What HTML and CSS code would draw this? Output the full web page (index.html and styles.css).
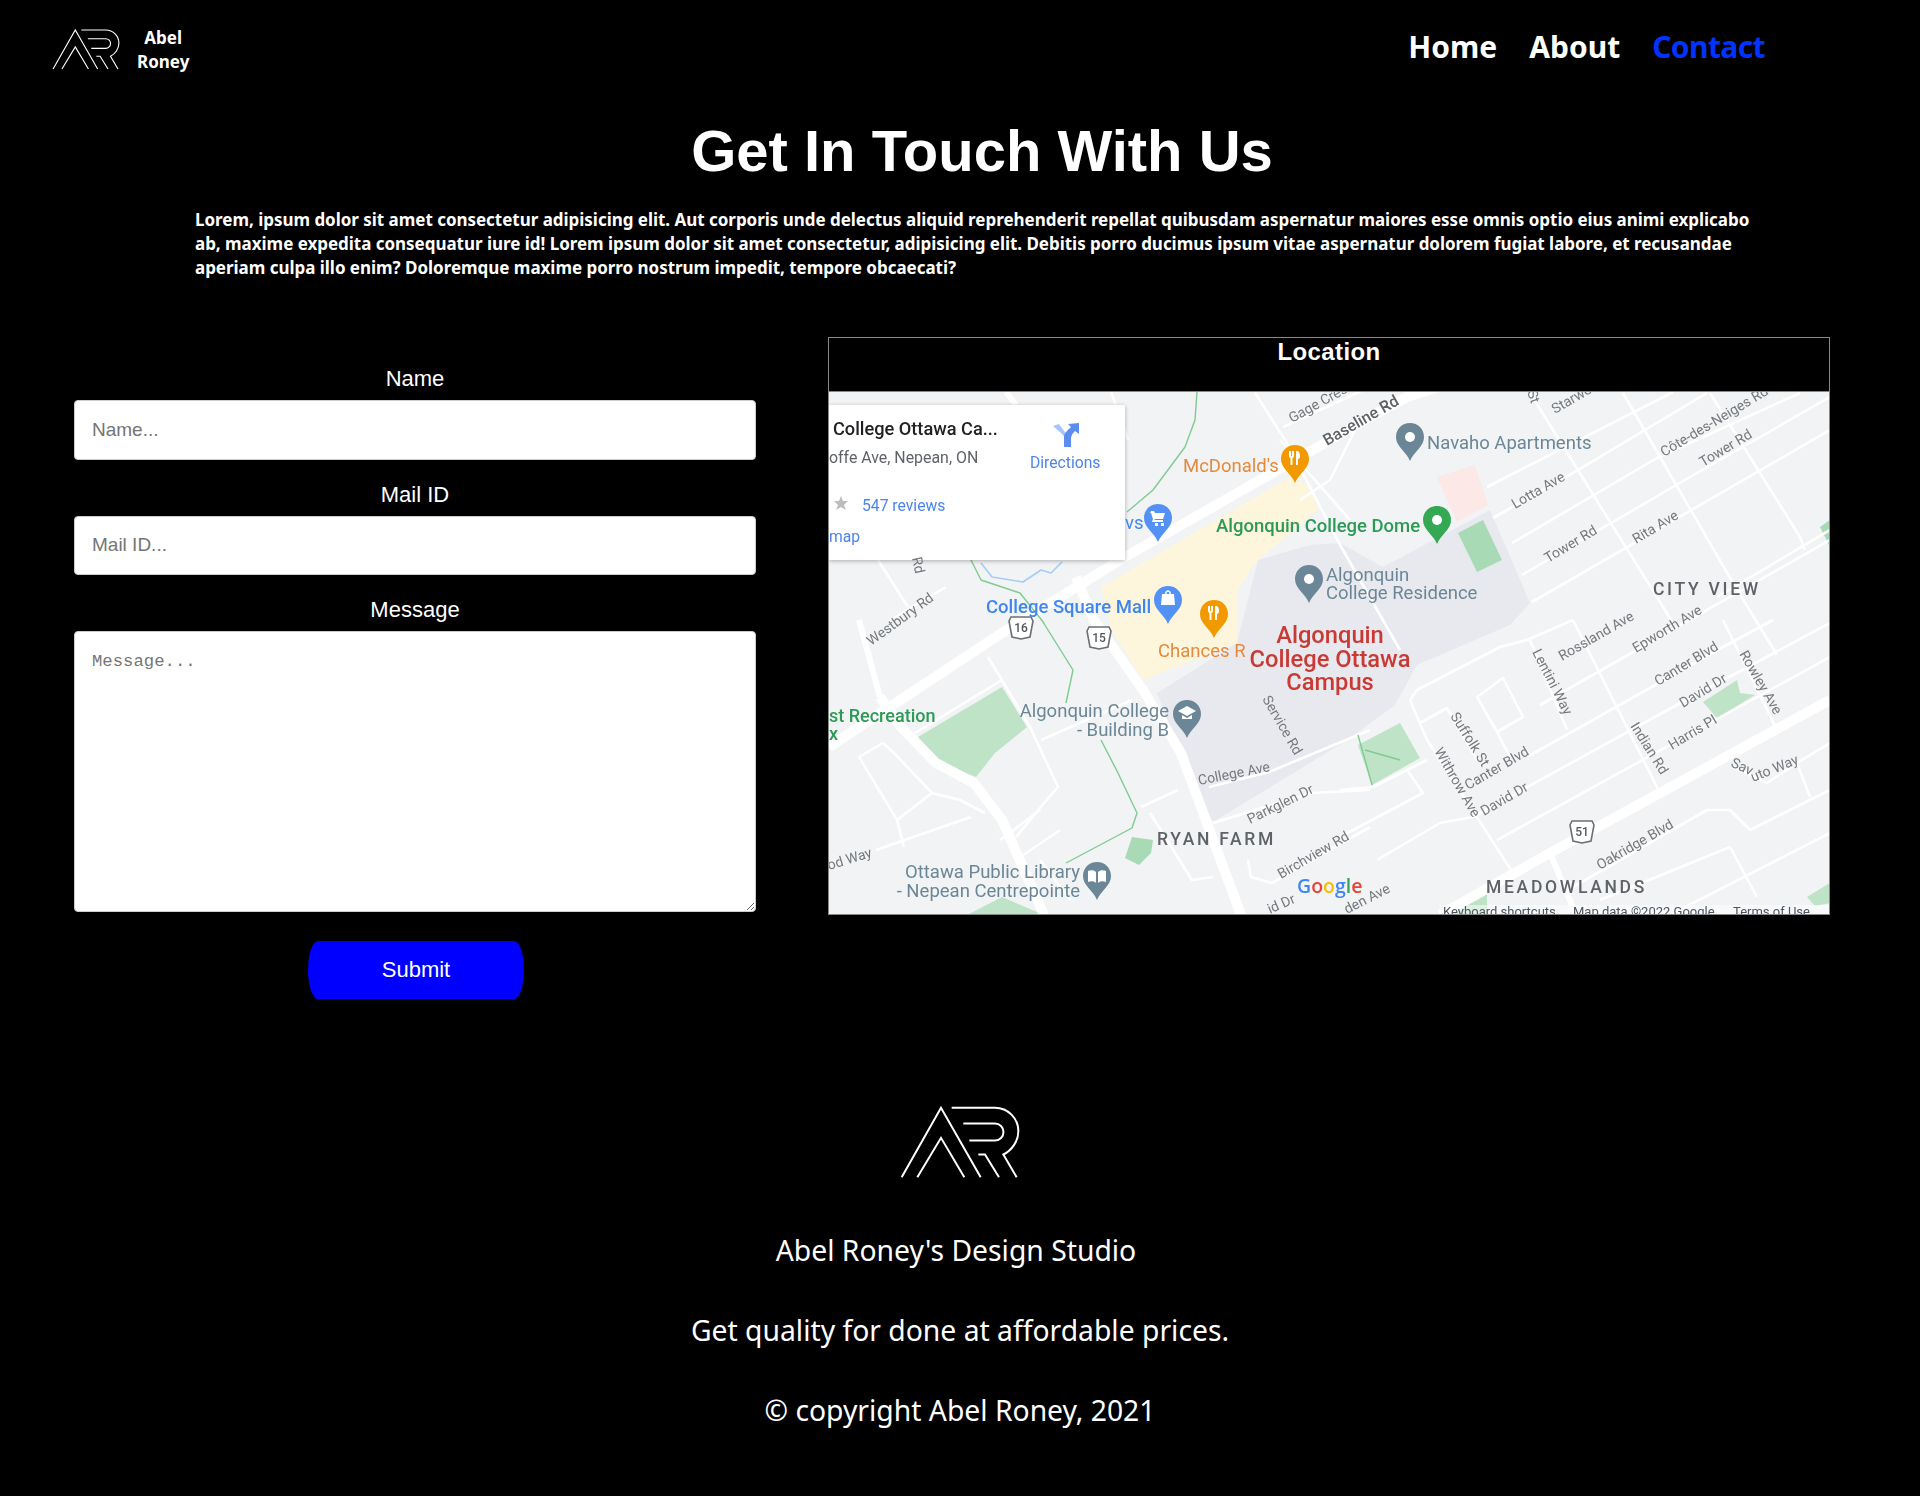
FILE: index.html
```html
<!DOCTYPE html>
<html lang="en">
<head>
  <meta charset="UTF-8" />
  <meta name="viewport" content="width=device-width, initial-scale=1.0" />
  <title>Contact - Abel Roney</title>
  <link rel="stylesheet" href="styles.css">
</head>
<body>
  <svg class="defs" width="0" height="0">
    <defs>
      <g id="ar" fill="none" stroke="currentColor" stroke-width="6">
        <path d="M65 258 183 50 302 258" />
        <path d="M112 258 183 140 253 258" />
        <path d="M215 50H345A70 70 0 0 1 415 120C415 150 395 178 370 190L410 258" />
        <path d="M250 97H345A25 25 0 0 1 345 148H268" />
        <path d="M295 190H315L357 258" />
      </g>
      <path id="pin" d="M14 0C6 0 0 6 0 14c0 10 10 14 14 24 4-10 14-14 14-24C28 6 22 0 14 0z" />
      <g id="shield">
        <path d="M-10-11H10L12-7 9 9 0 11-9 9-12-7z" fill="#fff" stroke="#6b7075" stroke-width="1.6" />
      </g>
    </defs>
  </svg>

  <header class="topbar">
    <a class="brand" href="#">
      <svg class="brand-logo" viewBox="60 45 360 218"><use href="#ar" /></svg>
      <span class="brand-name">Abel<br>Roney</span>
    </a>
    <nav class="nav">
      <a href="#">Home</a>
      <a href="#">About</a>
      <a class="active" href="#">Contact</a>
    </nav>
  </header>

  <main>
    <h1>Get In Touch With Us</h1>
    <p class="intro">Lorem, ipsum dolor sit amet consectetur adipisicing elit. Aut corporis unde delectus aliquid reprehenderit repellat quibusdam aspernatur maiores esse omnis optio eius animi explicabo ab, maxime expedita consequatur iure id! Lorem ipsum dolor sit amet consectetur, adipisicing elit. Debitis porro ducimus ipsum vitae aspernatur dolorem fugiat labore, et recusandae aperiam culpa illo enim? Doloremque maxime porro nostrum impedit, tempore obcaecati?</p>

    <section class="contact">
      <form class="contact-form">
        <label for="name">Name</label>
        <input type="text" id="name" placeholder="Name..." />
        <label for="mail">Mail ID</label>
        <input type="text" id="mail" placeholder="Mail ID..." />
        <label for="message">Message</label>
        <textarea id="message" placeholder="Message..."></textarea>
        <button type="submit">Submit</button>
      </form>

      <div class="location">
        <h2>Location</h2>
        <svg class="map" viewBox="829 392 1000 522" width="1000" height="522">
          <rect x="829" y="392" width="1001" height="523" fill="#f1f3f4" />

          <!-- areas -->
          <path fill="#e8e9ee" d="M1157 693 1237 643 1258 560 1310 545 1340 543 1383 567 1490 510 1530 603 1510 625 1417 665 1395 705 1343 743 1213 822 1181 753z" />
          <path fill="#fdf5dc" d="M1101 587 1290 477 1311 487 1318 510 1258 560 1237 590 1237 643 1143 680 1111 630z" />
          <path fill="#fce8e6" d="M1437 477 1475 465 1488 505 1457 522z" />
          <g fill="#a8dab5">
            <path d="M1458 533 1483 520 1502 560 1477 572z" />
            <path d="M1132 837 1153 840 1151 853 1139 865 1125 858z" />
            <path d="M1820 527 1830 520V547z" />
          </g>
          <g fill="#bfe3c6">
            <path d="M918 737 1002 687 1027 727 995 753 976 777 939 763z" />
            <path d="M1358 745 1400 723 1420 758 1372 785z" />
            <path d="M1703 702 1737 680 1740 693 1755 695 1717 718z" />
            <path d="M1807 897 1830 883V903L1815 906z" />
            <path d="M1467 897 1487 892V915H1440z" />
            <path d="M967 915 1002 897 1044 915z" />
          </g>

          <!-- main roads -->
          <g class="road-major">
            <path d="M829 747 1002 633 1125 557 1290 463 1370 417 1407 397 1445 385" />
            <path d="M1076 577 1094 620 1143 690 1181 753 1241 915" />
            <path d="M880 697 901 727 936 763 974 783 1002 820 1044 915" />
            <path d="M1440 915 1550 853 1660 793 1830 700" />
          </g>
          <path class="road-mid" d="M1006 392 1016 405M1550 853 1577 917M859 620 880 697" />

          <!-- small streets -->
          <g class="road">
            <path d="M1255 393 1287 443 1339 543 1400 650" />
            <path d="M1283 427 1370 387" />
            <path d="M1487 487 1673 392M1493 518 1573 473 1707 393M1512 543 1657 458 1800 393M1522 575 1690 477 1830 397M1532 602 1830 430M1717 597 1830 530" />
            <path d="M1530 393 1673 623M1623 393 1733 583 1777 655M1710 393 1800 537 1805 550" />
            <path d="M1410 700 1417 690 1500 647 1527 640 1573 620M1410 700 1427 740 1513 873" />
            <path d="M1540 705 1830 540M1527 757 1723 647 1773 620M1473 817 1673 707 1830 623M1497 840 1830 657" />
            <path d="M1573 620 1660 793M1723 620 1777 730" />
            <path d="M1377 860 1440 823 1473 817M1573 887 1707 810 1730 810 1750 830 1830 790M1600 900 1730 847M1660 920 1830 833" />
            <path d="M1730 847 1757 897M1733 767 1767 783 1797 763 1830 743M1797 763 1810 797" />
            <path d="M1420 723 1447 708 1477 760M1477 697 1503 678 1523 717 1497 732zM1497 732 1510 757M1530 640 1567 730" />
            <path d="M1340 790 1373 787 1427 760M1407 770 1423 793 1340 837" />
            <path d="M988 657 1030 727 1058 787 1044 803 1016 837M915 733 1002 680M1041 740 1132 700" />
            <path d="M859 757 883 743 894 753 932 793 960 800 985 813M859 757 897 820 904 847M897 820 932 793M876 850 971 817" />
            <path d="M1209 787 1269 772 1370 730M1141 807 1178 790M1213 823 1311 793 1370 790M1248 860 1251 877 1272 883 1370 827M1150 813 1192 880 1213 877" />
            <path d="M878 560 908 607M890 620 946 587M1111 392 1128 440M1280 440 1350 520M1360 420 1330 480 1300 500" />
            <path d="M1000 840 1040 810M1016 860 1060 830M1040 860 1070 900" />
          </g>

          <!-- trails and water -->
          <g class="trail">
            <path d="M1043 622 1073 670 1066 703M1101 740 1118 773 1137 813 1132 828 1066 863" />
            <path d="M1197 392 1195 420 1185 447 1153 490 1127 512" />
            <path d="M971 560 981 580 1020 593 1044 623" />
            <path d="M1358 735 1372 785M1365 750 1400 760" />
          </g>
          <path class="water" d="M981 563 992 577 1023 582 1041 570 1051 573 1062 562" />

          <!-- info panel -->
          <rect class="panel" x="829" y="405" width="296" height="155" />
          <text class="panel-title" x="833" y="435">College Ottawa Ca...</text>
          <text class="panel-sub" x="829" y="463">offe Ave, Nepean, ON</text>
          <text class="panel-link" x="862" y="511">547 reviews</text>
          <text class="panel-link" x="829" y="542">map</text>
          <text class="panel-link" x="1030" y="468">Directions</text>
          <path fill="#bdbdbd" d="M841 496 843 501 848 501 844 505 846 510 841 507 836 510 838 505 834 501 839 501z" />
          <path fill="#a6c5fa" d="M1053 426 1059 424 1067 435 1067 440 1062 434z" />
          <path fill="#5b8def" d="M1064 447V437C1064 433 1068 430 1071 427L1068 424 1079 423 1079 434 1075 431C1072 434 1071 436 1071 439V447z" />

          <!-- place labels -->
          <text class="lb orange" x="1183" y="472">McDonald's</text>
          <text class="lb blue" x="1125" y="529">vs</text>
          <text class="lb green bold" x="1216" y="532">Algonquin College Dome</text>
          <text class="lb slate" x="1427" y="449">Navaho Apartments</text>
          <text class="lb slate" x="1326" y="581">Algonquin</text>
          <text class="lb slate" x="1326" y="599">College Residence</text>
          <text class="lb blue bold" x="986" y="613">College Square Mall</text>
          <text class="lb orange" x="1158" y="657">Chances R</text>
          <text class="lb-red" x="1330" y="643">Algonquin</text>
          <text class="lb-red" x="1330" y="667">College Ottawa</text>
          <text class="lb-red" x="1330" y="690">Campus</text>
          <text class="lb lb-small green bold" x="829" y="722">st Recreation</text>
          <text class="lb lb-small green bold" x="829" y="740">x</text>
          <text class="lb slate end" x="1169" y="717">Algonquin College</text>
          <text class="lb slate end" x="1169" y="736">- Building B</text>
          <text class="lb slate end" x="1080" y="878">Ottawa Public Library</text>
          <text class="lb slate end" x="1080" y="897">- Nepean Centrepointe</text>
          <text class="hood" x="1157" y="845">RYAN FARM</text>
          <text class="hood" x="1486" y="893">MEADOWLANDS</text>
          <text class="hood" x="1653" y="595">CITY VIEW</text>

          <!-- pins -->
          <g fill="#f29900">
            <use href="#pin" x="1281" y="445" />
            <use href="#pin" x="1200" y="600" />
          </g>
          <g fill="#5491f5">
            <use href="#pin" x="1144" y="504" />
            <use href="#pin" x="1154" y="586" />
          </g>
          <use href="#pin" x="1423" y="506" fill="#34a853" />
          <g fill="#6b8797">
            <use href="#pin" x="1396" y="423" />
            <use href="#pin" x="1295" y="565" />
            <use href="#pin" x="1173" y="700" />
            <use href="#pin" x="1083" y="862" />
          </g>
          <g fill="#fff">
            <circle cx="1410" cy="437" r="5" />
            <circle cx="1309" cy="579" r="5" />
            <circle cx="1437" cy="520" r="5" />
            <path d="M1289 451h2v5h1v-5h2v5c0 1-1 2-1.500 2v7h-2v-7c-.5 0-1.500-1-1.500-2zM1297 451c2 0 3 2 3 5 0 2-1 3-2 3v6h-2v-14z" />
            <path d="M1208 606h2v5h1v-5h2v5c0 1-1 2-1.500 2v7h-2v-7c-.5 0-1.500-1-1.500-2zM1216 606c2 0 3 2 3 5 0 2-1 3-2 3v6h-2v-14z" />
            <path d="M1151 511h3l1 2h10l-2 6h-8l-1 1h9v2h-11l1-3-2-6h-1zM1155 523h3v3h-3zM1161 523h3v3h-3z" />
            <path d="M1162 594h12l1 11h-14zM1165 594c0-5 6-5 6 0h-1.500c0-3-3-3-3 0z" />
            <path d="M1187 706 1196 711 1187 716 1178 711zM1182 715 1187 718 1192 715V719H1182z" />
            <path d="M1088 871C1091 870 1094 870 1096 872V883C1094 881 1091 881 1088 882zM1106 871C1103 870 1100 870 1098 872V883C1100 881 1103 881 1106 882z" />
          </g>

          <!-- route shields -->
          <use href="#shield" x="1021" y="628" />
          <use href="#shield" x="1099" y="638" />
          <use href="#shield" x="1582" y="832" />
          <text class="shield-no" x="1021" y="632">16</text>
          <text class="shield-no" x="1099" y="642">15</text>
          <text class="shield-no" x="1582" y="836">51</text>

          <!-- street names -->
          <g class="street">
            <text class="main" transform="translate(1327 446) rotate(-30)">Baseline Rd</text>
            <text transform="translate(1292 423) rotate(-29)">Gage Cres</text>
            <text transform="translate(1527 392) rotate(70)">St</text>
            <text transform="translate(1555 414) rotate(-30)">Starwood</text>
            <text transform="translate(1664 457) rotate(-31)">Côte-des-Neiges Rd</text>
            <text transform="translate(1703 467) rotate(-31)">Tower Rd</text>
            <text transform="translate(1515 509) rotate(-30)">Lotta Ave</text>
            <text transform="translate(1548 563) rotate(-31)">Tower Rd</text>
            <text transform="translate(1636 544) rotate(-31)">Rita Ave</text>
            <text transform="translate(1562 661) rotate(-30)">Rossland Ave</text>
            <text transform="translate(1636 653) rotate(-31)">Epworth Ave</text>
            <text transform="translate(1658 686) rotate(-31)">Canter Blvd</text>
            <text transform="translate(1683 708) rotate(-31)">David Dr</text>
            <text transform="translate(1739 654) rotate(60)">Rowley Ave</text>
            <text transform="translate(1532 652) rotate(63)">Lentini Way</text>
            <text transform="translate(1672 750) rotate(-31)">Harris Pl</text>
            <text transform="translate(1630 726) rotate(58)">Indian Rd</text>
            <text transform="translate(1450 716) rotate(58)">Suffolk St</text>
            <text transform="translate(1468 790) rotate(-30)">Canter Blvd</text>
            <text transform="translate(1484 816) rotate(-30)">David Dr</text>
            <text transform="translate(1434 751) rotate(60)">Withrow Ave</text>
            <text transform="translate(1730 766) rotate(25)">Sav</text>
            <text transform="translate(1753 782) rotate(-22)">uto Way</text>
            <text transform="translate(1600 870) rotate(-30)">Oakridge Blvd</text>
            <text transform="translate(871 646) rotate(-36)">Westbury Rd</text>
            <text transform="translate(912 558) rotate(78)">Rd</text>
            <text transform="translate(829 870) rotate(-17)">od Way</text>
            <text transform="translate(1199 785) rotate(-11)">College Ave</text>
            <text transform="translate(1250 824) rotate(-26)">Parkglen Dr</text>
            <text transform="translate(1281 879) rotate(-30)">Birchview Rd</text>
            <text transform="translate(1262 699) rotate(60)">Service Rd</text>
            <text transform="translate(1270 914) rotate(-24)">id Dr</text>
            <text transform="translate(1347 914) rotate(-27)">den Ave</text>
          </g>

          <text class="google" x="1297" y="893"><tspan fill="#4285f4">G</tspan><tspan fill="#ea4335">o</tspan><tspan fill="#fbbc05">o</tspan><tspan fill="#4285f4">g</tspan><tspan fill="#34a853">l</tspan><tspan fill="#ea4335">e</tspan></text>

          <rect x="1440" y="905" width="390" height="10" fill="#fff" opacity=".5" />
          <g class="attrib">
            <text x="1443" y="916">Keyboard shortcuts</text>
            <text x="1573" y="916">Map data ©2022 Google</text>
            <text x="1733" y="916">Terms of Use</text>
          </g>
        </svg>
      </div>
    </section>
  </main>

  <footer class="footer">
    <svg class="footer-logo" viewBox="60 45 360 218"><use href="#ar" /></svg>
    <p class="studio">Abel Roney's Design Studio</p>
    <p>Get quality for done at affordable prices.</p>
    <p>© copyright Abel Roney, 2021</p>
  </footer>
</body>
</html>
```

FILE: styles.css
```css
* {
  box-sizing: border-box;
}

body {
  margin: 0;
  background: #000;
  color: #fff;
  font-family: 'Noto Sans', sans-serif;
}

.defs {
  position: absolute;
}

a {
  color: inherit;
  text-decoration: none;
}

/* top bar */
.topbar {
  display: flex;
  align-items: flex-start;
  justify-content: space-between;
  height: 96px;
  padding: 25px 155px 0 52px;
}

.brand {
  display: flex;
  align-items: flex-start;
  gap: 17px;
}

.brand-logo {
  width: 68px;
  height: 41px;
  margin-top: 4px;
  color: #fff;
}

.brand-name {
  margin-top: 1px;
  font-size: 17px;
  font-weight: 700;
  line-height: 24px;
  text-align: center;
}

.nav {
  display: flex;
  gap: 32px;
  font-size: 30px;
  font-weight: 700;
  line-height: 44px;
}

.nav .active {
  color: #0033ff;
  letter-spacing: -.6px;
}

/* heading */
h1 {
  margin: 21px 0 0 0;
  padding-left: 44px;
  font-family: 'Liberation Sans', sans-serif;
  font-size: 58px;
  font-weight: 700;
  line-height: 68px;
  text-align: center;
}

.intro {
  margin: 23px 155px 0 195px;
  font-size: 17px;
  font-weight: 700;
  line-height: 24px;
  letter-spacing: -.03px;
}

/* form + map */
.contact {
  display: flex;
  align-items: flex-start;
  gap: 72px;
  margin-top: 57px;
  padding-left: 74px;
}

.contact-form {
  display: flex;
  flex-direction: column;
  align-items: center;
  width: 682px;
  padding-top: 24px;
  font-family: 'Liberation Sans', sans-serif;
}

.contact-form label {
  margin-bottom: 6px;
  padding-top: 3px;
  font-size: 22px;
  line-height: 30px;
}

.contact-form input,
.contact-form textarea {
  width: 100%;
  padding: 18px 17px;
  border: 1px solid #ccc;
  border-radius: 4px;
  background: #fff;
  outline: none;
}

.contact-form input {
  height: 59.5px;
  margin-bottom: 17px;
  font-family: 'Liberation Sans', sans-serif;
  font-size: 19px;
}

.contact-form textarea {
  height: 281px;
  padding-top: 20px;
  font-family: 'Liberation Mono', monospace;
  font-size: 17.3px;
}

.contact-form button {
  width: 216px;
  height: 58px;
  margin-top: 29px;
  margin-left: 2px;
  border: none;
  border-radius: 10px / 29px;
  background: #0000ff;
  color: #fff;
  font-family: 'Liberation Sans', sans-serif;
  font-size: 22px;
  cursor: pointer;
}

.location {
  width: 1002px;
  border: 1px solid #888;
}

.location h2 {
  height: 54px;
  margin: 0;
  border-bottom: 1px solid #888;
  font-family: 'Liberation Sans', sans-serif;
  font-size: 24px;
  font-weight: 700;
  line-height: 28px;
  letter-spacing: .4px;
  text-align: center;
}

/* map drawing */
.map {
  display: block;
  filter: blur(.6px);
  font-family: Roboto, sans-serif;
}

.road-major,
.road-mid,
.road,
.trail,
.water {
  fill: none;
  stroke-linejoin: round;
}

.road-major {
  stroke: #fff;
  stroke-width: 10;
}

.road-mid {
  stroke: #fff;
  stroke-width: 6;
}

.road {
  stroke: #fff;
  stroke-width: 2.6;
}

.trail {
  stroke: #7fcb92;
  stroke-width: 1.4;
}

.water {
  stroke: #a5cdf7;
  stroke-width: 1.6;
}

.panel {
  fill: #fff;
  filter: drop-shadow(0 1px 2px rgba(0, 0, 0, .3));
}

.panel-title {
  font-size: 18.2px;
  font-weight: 500;
  fill: #202124;
}

.panel-sub {
  font-size: 15.9px;
  fill: #5f6368;
}

.panel-link {
  font-size: 15.7px;
  fill: #4d84ee;
}

.lb {
  font-size: 18.5px;
}

.lb-small {
  font-size: 18px;
}

.bold {
  font-weight: 500;
}

.end {
  text-anchor: end;
}

.orange {
  fill: #e58a3c;
}

.blue {
  fill: #3f86f0;
}

.green {
  fill: #2d9a55;
}

.slate {
  fill: #6b8797;
}

.lb-red {
  font-size: 23.7px;
  font-weight: 500;
  fill: #c93a35;
  text-anchor: middle;
}

.hood {
  font-size: 17.5px;
  font-weight: 500;
  letter-spacing: 2.7px;
  fill: #5f6368;
}

.shield-no {
  font-size: 12px;
  font-weight: 500;
  fill: #555;
  text-anchor: middle;
}

.street {
  font-size: 14px;
  fill: #75797d;
}

.street .main {
  font-size: 16px;
  font-weight: 500;
  fill: #5f6368;
}

.google {
  font-family: 'Open Sans', sans-serif;
  font-size: 19.5px;
  font-weight: 600;
}

.attrib {
  font-size: 13px;
  fill: #4b5563;
}

/* footer */
.footer {
  display: flex;
  flex-direction: column;
  align-items: center;
  margin-top: 107px;
  padding-bottom: 25px;
  font-size: 28.3px;
  line-height: 40px;
}

.footer-logo {
  width: 120px;
  height: 73px;
  margin-bottom: 51px;
  color: #fff;
}

.footer p {
  margin: 0 0 40px;
}

.footer .studio {
  margin-left: -8px;
}
```
